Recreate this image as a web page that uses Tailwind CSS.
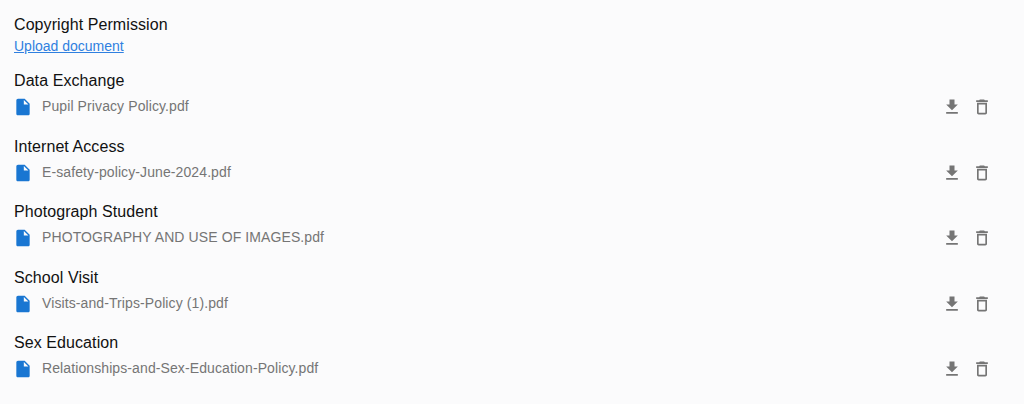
<!DOCTYPE html>
<html lang="en">
<head>
  <meta charset="UTF-8">
  <title>Documents</title>
  <script src="https://cdn.jsdelivr.net/npm/@tailwindcss/browser@4"></script>
</head>
<body class="bg-[#fbfbfc] font-['Liberation_Sans',sans-serif] h-[404px] overflow-hidden">
  <div class="pl-[14px] pr-[32px] pt-[15px]">
    <div class="h-[41px] mb-[15.3px]">
      <p class="text-[16px] leading-[20px] tracking-[0.08px] text-[#111]">Copyright Permission</p>
      <a href="#" class="block text-[14px] leading-[20px] mt-[1px] text-[#2f80e0] underline">Upload document</a>
    </div>

    <div class="h-[65.5px]">
      <p class="text-[16px] leading-[20px] tracking-[0.08px] text-[#111]">Data Exchange</p>
      <div class="flex items-center h-[31px] text-[14px] tracking-[0.1px] text-[#757575]">
        <svg class="w-5 h-5 fill-[#1976d2] mr-[6px] -ml-[1px] mt-[1px]" viewBox="0 0 24 24"><path d="M6 2c-1.1 0-1.99.9-1.99 2L4 20c0 1.1.89 2 1.99 2H18c1.1 0 2-.9 2-2V8l-6-6H6zm7 7V3.5L18.5 9H13z"/></svg>
        <span class="flex-1 ml-[3px]">Pupil Privacy Policy.pdf</span>
        <svg class="w-5 h-5 fill-[#757575] mr-[10px] mt-[1px]" viewBox="0 0 24 24"><path d="M5 20h14v-2H5v2zM19 9h-4V3H9v6H5l7 7 7-7z"/></svg>
        <svg class="w-5 h-5 fill-[#757575] mt-[1px]" viewBox="0 0 24 24"><path d="M6 19c0 1.1.9 2 2 2h8c1.1 0 2-.9 2-2V7H6v12zM8 9h8v10H8V9zm7.5-5l-1-1h-5l-1 1H5v2h14V4z"/></svg>
      </div>
    </div>

    <div class="h-[65.5px]">
      <p class="text-[16px] leading-[20px] tracking-[0.08px] text-[#111]">Internet Access</p>
      <div class="flex items-center h-[31px] text-[14px] tracking-[0.1px] text-[#757575]">
        <svg class="w-5 h-5 fill-[#1976d2] mr-[6px] -ml-[1px] mt-[1px]" viewBox="0 0 24 24"><path d="M6 2c-1.1 0-1.99.9-1.99 2L4 20c0 1.1.89 2 1.99 2H18c1.1 0 2-.9 2-2V8l-6-6H6zm7 7V3.5L18.5 9H13z"/></svg>
        <span class="flex-1 ml-[3px]">E-safety-policy-June-2024.pdf</span>
        <svg class="w-5 h-5 fill-[#757575] mr-[10px] mt-[1px]" viewBox="0 0 24 24"><path d="M5 20h14v-2H5v2zM19 9h-4V3H9v6H5l7 7 7-7z"/></svg>
        <svg class="w-5 h-5 fill-[#757575] mt-[1px]" viewBox="0 0 24 24"><path d="M6 19c0 1.1.9 2 2 2h8c1.1 0 2-.9 2-2V7H6v12zM8 9h8v10H8V9zm7.5-5l-1-1h-5l-1 1H5v2h14V4z"/></svg>
      </div>
    </div>

    <div class="h-[65.5px]">
      <p class="text-[16px] leading-[20px] tracking-[0.08px] text-[#111]">Photograph Student</p>
      <div class="flex items-center h-[31px] text-[14px] tracking-[0.1px] text-[#757575]">
        <svg class="w-5 h-5 fill-[#1976d2] mr-[6px] -ml-[1px] mt-[1px]" viewBox="0 0 24 24"><path d="M6 2c-1.1 0-1.99.9-1.99 2L4 20c0 1.1.89 2 1.99 2H18c1.1 0 2-.9 2-2V8l-6-6H6zm7 7V3.5L18.5 9H13z"/></svg>
        <span class="flex-1 ml-[3px]">PHOTOGRAPHY AND USE OF IMAGES.pdf</span>
        <svg class="w-5 h-5 fill-[#757575] mr-[10px] mt-[1px]" viewBox="0 0 24 24"><path d="M5 20h14v-2H5v2zM19 9h-4V3H9v6H5l7 7 7-7z"/></svg>
        <svg class="w-5 h-5 fill-[#757575] mt-[1px]" viewBox="0 0 24 24"><path d="M6 19c0 1.1.9 2 2 2h8c1.1 0 2-.9 2-2V7H6v12zM8 9h8v10H8V9zm7.5-5l-1-1h-5l-1 1H5v2h14V4z"/></svg>
      </div>
    </div>

    <div class="h-[65.5px]">
      <p class="text-[16px] leading-[20px] tracking-[0.08px] text-[#111]">School Visit</p>
      <div class="flex items-center h-[31px] text-[14px] tracking-[0.1px] text-[#757575]">
        <svg class="w-5 h-5 fill-[#1976d2] mr-[6px] -ml-[1px] mt-[1px]" viewBox="0 0 24 24"><path d="M6 2c-1.1 0-1.99.9-1.99 2L4 20c0 1.1.89 2 1.99 2H18c1.1 0 2-.9 2-2V8l-6-6H6zm7 7V3.5L18.5 9H13z"/></svg>
        <span class="flex-1 ml-[3px]">Visits-and-Trips-Policy (1).pdf</span>
        <svg class="w-5 h-5 fill-[#757575] mr-[10px] mt-[1px]" viewBox="0 0 24 24"><path d="M5 20h14v-2H5v2zM19 9h-4V3H9v6H5l7 7 7-7z"/></svg>
        <svg class="w-5 h-5 fill-[#757575] mt-[1px]" viewBox="0 0 24 24"><path d="M6 19c0 1.1.9 2 2 2h8c1.1 0 2-.9 2-2V7H6v12zM8 9h8v10H8V9zm7.5-5l-1-1h-5l-1 1H5v2h14V4z"/></svg>
      </div>
    </div>

    <div class="h-[65.5px]">
      <p class="text-[16px] leading-[20px] tracking-[0.08px] text-[#111]">Sex Education</p>
      <div class="flex items-center h-[31px] text-[14px] tracking-[0.1px] text-[#757575]">
        <svg class="w-5 h-5 fill-[#1976d2] mr-[6px] -ml-[1px] mt-[1px]" viewBox="0 0 24 24"><path d="M6 2c-1.1 0-1.99.9-1.99 2L4 20c0 1.1.89 2 1.99 2H18c1.1 0 2-.9 2-2V8l-6-6H6zm7 7V3.5L18.5 9H13z"/></svg>
        <span class="flex-1 ml-[3px]">Relationships-and-Sex-Education-Policy.pdf</span>
        <svg class="w-5 h-5 fill-[#757575] mr-[10px] mt-[1px]" viewBox="0 0 24 24"><path d="M5 20h14v-2H5v2zM19 9h-4V3H9v6H5l7 7 7-7z"/></svg>
        <svg class="w-5 h-5 fill-[#757575] mt-[1px]" viewBox="0 0 24 24"><path d="M6 19c0 1.1.9 2 2 2h8c1.1 0 2-.9 2-2V7H6v12zM8 9h8v10H8V9zm7.5-5l-1-1h-5l-1 1H5v2h14V4z"/></svg>
      </div>
    </div>
  </div>
</body>
</html>
